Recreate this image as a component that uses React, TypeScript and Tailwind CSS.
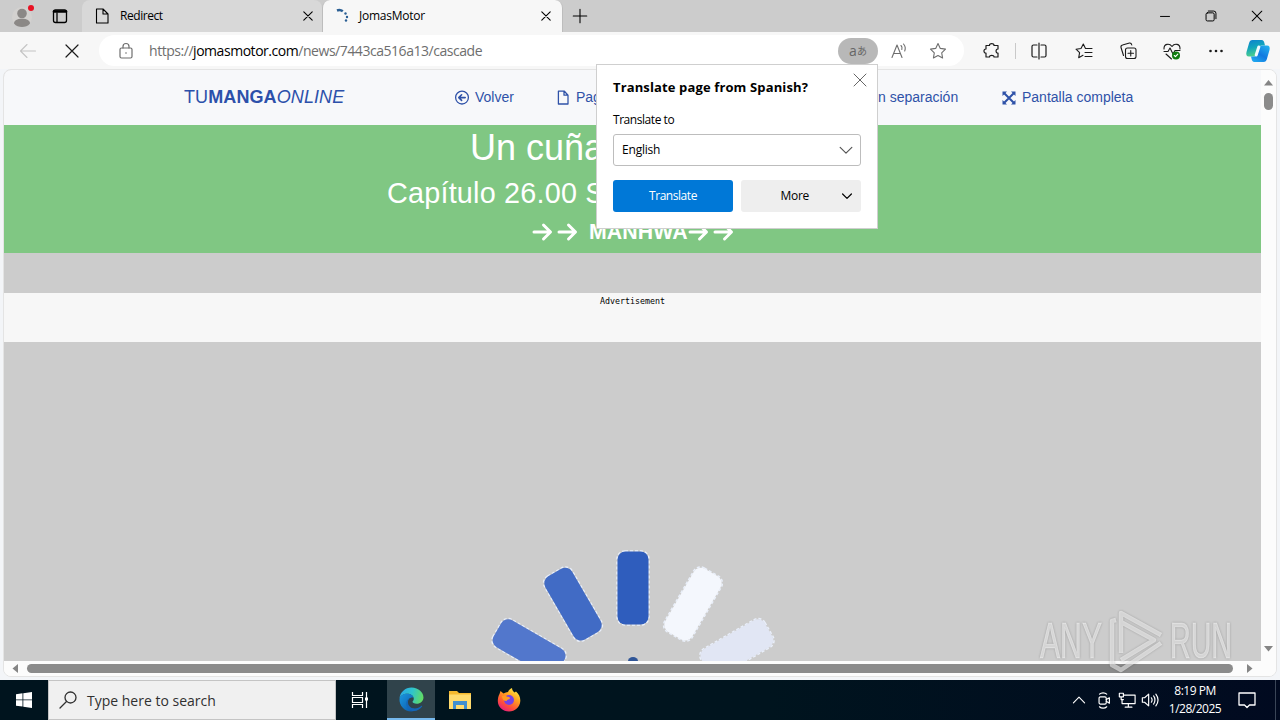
import type { ReactNode } from "react";

interface IconProps {
  children: ReactNode;
  size?: number;
  stroke?: number;
  className?: string;
}

// All line icons share a 20x20 grid
function Icon({ children, size = 20, stroke = 1.1, className = "" }: IconProps) {
  return (
    <svg
      width={size}
      height={size}
      viewBox="0 0 20 20"
      fill="none"
      stroke="currentColor"
      strokeWidth={stroke}
      strokeLinecap="round"
      strokeLinejoin="round"
      className={`shrink-0 ${className}`}
    >
      {children}
    </svg>
  );
}

function CloseIcon({ size = 20, stroke = 1.1 }: { size?: number; stroke?: number }) {
  return (
    <Icon size={size} stroke={stroke}>
      <path d="M4 4l12 12M16 4L4 16" />
    </Icon>
  );
}

const starPath =
  "M10 2.6l2.3 4.8 5.2.7-3.8 3.7.9 5.2-4.6-2.5L5.4 17l.9-5.2-3.8-3.7 5.2-.7z";

function TabBar() {
  return (
    <div className="flex h-8 bg-[#cccccc] text-black">
      <div className="flex w-[82px] shrink-0 items-center">
        <svg width="24" height="26" viewBox="0 0 24 26" className="ml-[11px]">
          <circle cx="11" cy="14" r="10" fill="#d3d1cf" />
          <circle cx="11" cy="10.5" r="4.8" fill="#8b8886" />
          <path d="M3 20.5c0-3 3-4.7 8-4.7s8 1.7 8 4.7c-2 2.7-5 3.5-8 3.5s-6-.8-8-3.5z" fill="#8b8886" />
          <circle cx="20" cy="5" r="3" fill="#e81123" />
        </svg>
        <Icon size={20} stroke={1.3} className="ml-[15px]">
          <rect x="3.5" y="4" width="13" height="12.5" rx="2" />
          <path d="M4 5.5h12" strokeWidth="2.6" />
          <path d="M7 7v9" />
        </Icon>
      </div>
      <div className="flex w-[240px] shrink-0 items-center rounded-t-lg bg-[#d8d8d8] pl-[10px]">
        <Icon size={20} stroke={1.1}>
          <path d="M4.500 3h6.500l5 5v9h-11.500zM11 3v5h5" />
        </Icon>
        <span className="ml-2 flex-1 text-[12px] tracking-[-0.45px]">Redirect</span>
        <span className="mr-[7px]">
          <CloseIcon size={14} stroke={1.6} />
        </span>
      </div>
      <div className="flex w-[241px] shrink-0 items-center rounded-t-lg border-x border-[#bdbdbd] bg-[#f7f7f7] pl-3">
        <svg width="16" height="16" viewBox="0 0 16 16" fill="none" className="shrink-0">
          <path d="M2 2.500c2-.8 4-.6 5.800.8" stroke="#2b5f94" strokeWidth="2.500" />
          <circle cx="10.500" cy="5.500" r="1.200" fill="#2b5f94" />
          <circle cx="12" cy="9" r="1.200" fill="#2b5f94" />
          <circle cx="11" cy="12.500" r="1.200" fill="#2b5f94" />
        </svg>
        <span className="ml-2 flex-1 text-[12px] tracking-[-0.25px]">JomasMotor</span>
        <span className="mr-[9px]">
          <CloseIcon size={14} stroke={1.6} />
        </span>
      </div>
      <div className="flex w-[33px] items-center justify-center">
        <Icon size={18} stroke={1.2}>
          <path d="M10 2.500v15M2.500 10h15" />
        </Icon>
      </div>
      <div className="flex-1" />
      <div className="flex w-[138px]">
        <div className="flex w-[46px] items-center justify-center">
          <Icon size={18}>
            <path d="M5 10.500h10" />
          </Icon>
        </div>
        <div className="flex w-[46px] items-center justify-center">
          <Icon size={18}>
            <rect x="4.500" y="6.500" width="9" height="9" rx="1.500" />
            <path d="M7 4.500h6a2.500 2.500 0 0 1 2.500 2.500v6" />
          </Icon>
        </div>
        <div className="flex w-[46px] items-center justify-center">
          <CloseIcon size={16} stroke={1.3} />
        </div>
      </div>
    </div>
  );
}

function Copilot() {
  return (
    <svg width="26" height="24" viewBox="0 0 26 24">
      <defs>
        <linearGradient id="cp1" x1="0" y1="0" x2="0.3" y2="1">
          <stop offset="0" stopColor="#0f7fd0" />
          <stop offset="0.5" stopColor="#12a5bc" />
          <stop offset="1" stopColor="#4fd08c" />
        </linearGradient>
        <linearGradient id="cp2" x1="1" y1="0" x2="0.3" y2="1">
          <stop offset="0" stopColor="#25b7f0" />
          <stop offset="0.6" stopColor="#1379e0" />
          <stop offset="1" stopColor="#1fa4ee" />
        </linearGradient>
      </defs>
      <path d="M7.500 1h9c2 0 2.500 1.500 3 3.500l.5 2h-3c-2 0-3 1-3.600 3l-1.500 5c-.6 2-1.500 3-3.400 3H4C1.500 17.500.8 15.500 1.500 13l2.600-9C4.700 2 5.500 1 7.500 1z" fill="url(#cp1)" />
      <path d="M18.500 23h-9c-2 0-2.500-1.500-3-3.500l-.5-2h3c2 0 3-1 3.600-3l1.500-5c.6-2 1.500-3 3.400-3H22c2.500 0 3.200 2 2.500 4.500l-2.600 9c-.6 2-1.400 3-3.400 3z" fill="url(#cp2)" />
      <path d="M13.800 8l-2.600 8" stroke="#f3fbff" strokeWidth="3" strokeLinecap="round" />
    </svg>
  );
}

function Toolbar() {
  return (
    <div className="flex h-[37px] items-center bg-[#f7f7f7] text-[#1b1b1b]">
      <div className="flex w-14 justify-center text-[#c4c4c4]">
        <Icon>
          <path d="M2.500 10h15M9 3.500L2.500 10l6.500 6.500" />
        </Icon>
      </div>
      <div className="flex w-[43px] justify-center pr-[11px]">
        <CloseIcon size={20} stroke={1.2} />
      </div>
      <div className="flex h-[31px] w-[865px] items-center rounded-full bg-white text-[#6e6e6e]">
        <Icon className="ml-[17px]" stroke={1.2}>
          <rect x="4" y="7" width="12" height="10" rx="1.500" />
          <path d="M7 7V5.500a3 3 0 0 1 6 0V7" />
          <circle cx="10" cy="12" r="0.800" fill="currentColor" stroke="none" />
        </Icon>
        <span className="ml-[13px] flex-1 text-[14px] tracking-[-0.46px]">
          https://<span className="text-black">jomasmotor.com</span>/news/7443ca516a13/cascade
        </span>
        <span className="flex h-[26px] w-10 items-center justify-center rounded-full bg-[#b8b8b8] text-[14px] leading-none text-[#666]">
          a<span className="font-['Noto_Sans_CJK_JP',sans-serif] text-[10px]">あ</span>
        </span>
        <span className="flex w-10 justify-center pl-px">
          <Icon>
            <path d="M3 16.500L8 4l5 12.500M4.800 12.500h6.400M12 4.500c1 1 1.300 2.500.8 4M14.500 3c1.800 2 2.200 4.500 1.200 7" />
          </Icon>
        </span>
        <span className="flex w-[46px] justify-start pl-[10px]">
          <Icon>
            <path d={starPath} />
          </Icon>
        </span>
      </div>
      <div className="flex w-[51px] justify-center pl-1">
        <Icon stroke={1.2}>
          <path d="M4 4.500h3.500c-.2-2.500 4.700-2.500 4.500 0H16V8c-2.600-.2-2.600 4.400 0 4.200V16h-4c.2-2.200-4.700-2.200-4.500 0H4v-3.800c-2.700.2-2.700-4.400 0-4.200z" />
        </Icon>
      </div>
      <div className="h-4 w-px bg-[#c9c9c9]" />
      <div className="flex w-[46px] justify-center">
        <Icon stroke={1.2}>
          <path d="M8 4H4.500A1.500 1.500 0 0 0 3 5.500v9A1.500 1.500 0 0 0 4.500 16H8M12 4h3.500A1.500 1.500 0 0 1 17 5.500v9a1.500 1.500 0 0 1-1.500 1.500H12M10 2v16" />
        </Icon>
      </div>
      <div className="flex w-11 justify-center">
        <Icon stroke={1.1}>
          <path d="M12 7.500h-.5L9.300 3 7 7.500l-5 .7 3.600 3.500-.9 5L9 14.300M12.500 7.500H18M11 11.500h7M11 15.500h7" />
        </Icon>
      </div>
      <div className="flex w-11 justify-center">
        <Icon stroke={1.1}>
          <rect x="7.500" y="7" width="10.500" height="10.500" rx="2" />
          <path d="M12.750 9.500v5.500M10 12.250h5.500M5.500 14.500L3 6.500c-.3-1.500.3-2.200 1.500-2.500l7-2c1.400-.2 2 .5 2.300 2" />
        </Icon>
      </div>
      <div className="flex w-11 justify-center">
        <Icon stroke={1.1}>
          <path d="M2 8c-.3-5.500 5.500-6 8-2.500 2.500-3.500 8.300-3 8 2.500M2 10.500h4l2-3.500 3 6 2-3.500h5M4 13l5.500 5" />
          <circle cx="14" cy="14.500" r="4" fill="#107c10" stroke="none" />
          <path d="M12.300 14.500l1.200 1.200 2.300-2.500" stroke="#fff" />
        </Icon>
      </div>
      <div className="flex w-11 justify-center">
        <Icon>
          <g fill="currentColor" stroke="none">
            <circle cx="4.500" cy="10" r="1.300" />
            <circle cx="10" cy="10" r="1.300" />
            <circle cx="15.500" cy="10" r="1.300" />
          </g>
        </Icon>
      </div>
      <div className="flex w-[39px] justify-center">
        <Copilot />
      </div>
    </div>
  );
}

function Arrow() {
  return (
    <svg width="25" height="20" viewBox="0 0 25 20" fill="none" stroke="#fff" strokeWidth="3" strokeLinecap="round" strokeLinejoin="round">
      <path d="M2 10h16M11.500 3l7 7-7 7" />
    </svg>
  );
}

// Only the bars above the fold are visible
const spinnerBars = [
  { angle: -60, fill: "#5277cc" },
  { angle: -30, fill: "#416bc5" },
  { angle: 0, fill: "#2f5dbd" },
  { angle: 30, fill: "#f4f7fd" },
  { angle: 60, fill: "#e1e6f4" },
];

function Spinner() {
  return (
    <svg width="320" height="121" viewBox="0 0 320 121">
      {spinnerBars.map((bar) => (
        <g key={bar.angle} transform={`rotate(${bar.angle} 160 168)`}>
          <rect
            x="144"
            y="11"
            width="32"
            height="74"
            rx="8"
            fill="none"
            stroke="#e9effa"
            strokeWidth="1.5"
            strokeDasharray="3 2"
          />
          <rect x="144.500" y="11.500" width="31" height="73" rx="8" fill={bar.fill} />
        </g>
      ))}
      <ellipse cx="160" cy="121" rx="5" ry="4" fill="#2f5597" />
    </svg>
  );
}

function Viewer() {
  return (
    <div className="flex h-[591px] w-[1257px] flex-col overflow-hidden bg-[#cccccc] font-['Liberation_Sans',Arial,sans-serif]">
      <div className="flex h-[55px] shrink-0 items-center bg-[#f7f8fa] pl-[180px] text-[14px] text-[#2f52a8]">
        <div className="w-[270px] text-[18px] tracking-[0.1px] text-[#2c50aa]">
          TU<b>MANGA</b>
          <i>ONLINE</i>
        </div>
        <div className="flex w-[102px] items-center">
          <Icon size={16} stroke={1.6}>
            <circle cx="10" cy="9.500" r="8" />
            <path d="M14 9.500H6.500M9.500 6L6 9.500l3.500 3.500" strokeWidth="2" />
          </Icon>
          <span className="ml-[5px]">Volver</span>
        </div>
        <div className="flex w-[200px] items-center">
          <Icon size={16} stroke={1.6}>
            <path d="M3 1.500h7.500l4.500 5v11h-12zM10 1.500v5h5" />
          </Icon>
          <span className="ml-1">Pag</span>
        </div>
        <div className="w-[246px] pl-[122px]">n separación</div>
        <div className="flex items-center">
          <svg width="14" height="14" viewBox="0 0 14 14" fill="#2f52a8" stroke="#2f52a8">
            <path d="M2 2l10 10M12 2L2 12" strokeWidth="2" />
            <path d="M.5.5H5L.5 5zM13.500.5V5L9 .5zM.5 13.500V9L5 13.500zM13.500 13.500H9L13.500 9z" stroke="none" />
          </svg>
          <span className="ml-[6px] whitespace-nowrap">Pantalla completa</span>
        </div>
      </div>

      <div className="h-32 shrink-0 bg-[#80c783] text-white">
        <h1 className="pl-[466px] pt-px text-[36px] leading-[43px]">Un cuña</h1>
        <h2 className="pl-[383px] pt-[7px] text-[28.8px] leading-[35px] tracking-[0.2px]">
          Capítulo 26.00 S
        </h2>
        <div className="flex items-center pl-[528px] pt-[6px] text-[21.3px] font-bold leading-[28px]">
          <Arrow />
          <Arrow />
          <span className="ml-[7px] pt-px tracking-[0.1px]">MANHWA</span>
          <Arrow />
          <Arrow />
        </div>
      </div>

      <div className="mt-10 h-[49px] shrink-0 bg-[#f7f7f7] pt-[3px] text-center font-['DejaVu_Sans_Mono',monospace] text-[8.3px] leading-[11px] text-black">
        Advertisement
      </div>
      <div className="mt-auto flex pl-[469px]">
        <Spinner />
      </div>
    </div>
  );
}

function VerticalScrollbar() {
  return (
    <div className="flex flex-1 flex-col items-center bg-[#fcfcfc] pt-[10px] pb-[9px]">
      <svg width="9" height="6">
        <path d="M4.500 0L9 5.500H0z" fill="#858585" />
      </svg>
      <div className="mt-[7px] h-[17px] w-[9px] rounded-full bg-[#8b8b8b]" />
      <svg width="9" height="6" className="mt-auto">
        <path d="M0 0h9L4.500 5.500z" fill="#858585" />
      </svg>
    </div>
  );
}

function HorizontalScrollbar() {
  return (
    <div className="flex h-[15px] items-center bg-[#fcfcfc] pl-2">
      <svg width="6" height="9">
        <path d="M6 0v9L.5 4.500z" fill="#858585" />
      </svg>
      <div className="ml-[9px] h-[9px] w-[1206px] rounded-full bg-[#8b8b8b]" />
      <svg width="6" height="9" className="ml-[14px]">
        <path d="M0 0v9l5.500-4.500z" fill="#858585" />
      </svg>
    </div>
  );
}

function TranslatePopup() {
  return (
    <div className="absolute left-[596px] top-[64px] h-[165px] w-[282px] border border-[#cfcfcf] bg-white px-4 text-[12px] text-black">
      <div className="flex h-[44px] items-center justify-between">
        <h3 className="whitespace-nowrap pt-[2px] text-[13px] font-bold tracking-[0.13px]">
          Translate page from Spanish?
        </h3>
        <span className="-mr-[9px] -mt-[14px] text-[#666]">
          <CloseIcon size={20} stroke={1} />
        </span>
      </div>
      <div className="h-[25px] pt-[2px] leading-[18px] tracking-[-0.45px]">Translate to</div>
      <div className="flex h-8 items-center justify-between rounded-[3px] border border-[#bdbdbd] pl-2 pr-[5px]">
        <span className="tracking-[-0.2px]">English</span>
        <Icon size={18} stroke={1.3} className="text-[#555]">
          <path d="M3.500 7l6.500 6.500L16.500 7" />
        </Icon>
      </div>
      <div className="mt-[14px] flex gap-2">
        <button className="h-8 w-[120px] rounded-[3px] bg-[#0078d7] tracking-[-0.45px] text-white">
          Translate
        </button>
        <button className="flex h-8 w-[120px] items-center justify-end rounded-[3px] bg-[#eeeeee] pr-[6px]">
          <span className="mr-[30px] tracking-[-0.3px]">More</span>
          <Icon size={16} stroke={1.5}>
            <path d="M4.500 7.500L10 13l5.500-5.500" />
          </Icon>
        </button>
      </div>
    </div>
  );
}

function Watermark() {
  return (
    <svg
      width="204"
      height="68"
      viewBox="0 0 204 68"
      className="pointer-events-none absolute left-[1036px] top-[607px] font-['Liberation_Sans_Narrow','Liberation_Sans',sans-serif] drop-shadow-[0_0_1px_rgba(0,0,0,0.4)]"
    >
      <g fill="#fff" fillOpacity="0.55" stroke="#fff" strokeOpacity="0.35" fontSize="50">
        <text x="4" y="51" textLength="62" lengthAdjust="spacingAndGlyphs">ANY</text>
        <text x="134" y="51" textLength="62" lengthAdjust="spacingAndGlyphs">RUN</text>
      </g>
      <g fill="none" stroke="#fff" strokeOpacity="0.55" strokeWidth="4.500" strokeLinejoin="round">
        <path d="M85 46V6l40 22M85 15l33 18-33 20" />
        <path d="M80 13l-4 1v44l9 5 40-27" />
      </g>
    </svg>
  );
}

function EdgeLogo() {
  return (
    <svg width="25" height="25" viewBox="0 0 24 24">
      <defs>
        <linearGradient id="edgeTop" x1="0" y1="0.3" x2="1" y2="0.5">
          <stop offset="0" stopColor="#2aa8e8" />
          <stop offset="0.5" stopColor="#2fc4cc" />
          <stop offset="1" stopColor="#62dc62" />
        </linearGradient>
        <linearGradient id="edgeLow" x1="0" y1="0" x2="1" y2="1">
          <stop offset="0" stopColor="#1b98e0" />
          <stop offset="1" stopColor="#0b56a8" />
        </linearGradient>
      </defs>
      <path d="M0.500 11C1 5 6 .5 12 .5c7 0 11.500 5 11.500 9.500 0 3.500-3 6-6.500 6-2.500 0-4-.8-4-1.800 0-.8 1.200-1.200 1.200-3C14.200 8.500 11 6.500 8 6.500c-3.500 0-6.500 2-7.500 4.500z" fill="url(#edgeTop)" />
      <path d="M.5 11.500C1 8.500 4 6.500 8 6.500c3 0 5.500 1.500 6 3.800-3-.8-6 1.500-6 5 0 4 3 7.500 7 7.500-1 .5-2 .7-3 .7-7 0-12-6-11.500-12z" fill="url(#edgeLow)" />
      <path d="M10 11c-3 3-1 9 4 9.500 3 .3 5.500-.8 7.300-2.300.7-.5 1.200 0 .7.800C20 21.500 17.500 23 14.500 23c-5 0-8-4-7.500-8 .3-2 1.500-3.500 3-4z" fill="#1466b8" />
    </svg>
  );
}

function FirefoxLogo() {
  return (
    <svg width="24" height="24" viewBox="0 0 24 24">
      <defs>
        <linearGradient id="fox" x1="0.8" y1="0" x2="0.2" y2="1">
          <stop offset="0" stopColor="#fff14a" />
          <stop offset="0.35" stopColor="#ffa51f" />
          <stop offset="0.7" stopColor="#ff5038" />
          <stop offset="1" stopColor="#e31587" />
        </linearGradient>
      </defs>
      <path d="M2.500 6l1-3 3 2.500c1.500-1 3-1.500 4.500-1.500.5-1.500 2-3.500 4-4 0 2 1 3 2.500 4.500L19 3.500c3 2.500 4.500 6 4.300 9.500C23 19 18 23.500 12 23.500S.8 19 .8 13c0-2.500.6-5 1.700-7z" fill="url(#fox)" />
      <circle cx="12" cy="12" r="5" fill="#7542e5" />
      <path d="M5 8c2-1 4-.5 5 .8 1.500 0 3 .4 3 1.400-.5 1.500-3 1-3.500 2.800C6.500 13 5 11 5 8z" fill="#ff9a22" />
    </svg>
  );
}

function Taskbar() {
  return (
    <div className="flex h-10 items-center bg-gradient-to-r from-[#00141e] from-60% to-[#010a20] text-white">
      <div className="flex w-12 justify-center">
        <svg width="16" height="16" viewBox="0 0 16 16" fill="#fff">
          <path d="M0 2.200l6.500-.9v6.200H0zM7.300 1.200L16 0v7.500H7.300zM0 8.300h6.500v6.300L0 13.700zM7.300 8.300H16V16l-8.700-1.300z" />
        </svg>
      </div>
      <div className="flex h-10 w-[288px] items-center border border-[#c4c4c4] bg-[#f0f0f0] text-[#303030]">
        <Icon size={20} stroke={1.3} className="ml-[9px]">
          <circle cx="12.500" cy="7.500" r="5.500" />
          <path d="M8.500 11.500L2 18" />
        </Icon>
        <span className="ml-[9px] text-[14px]">Type here to search</span>
      </div>
      <div className="flex w-[51px] justify-center pr-[3px]">
        <svg width="18" height="18" viewBox="0 0 18 18" fill="none" stroke="#fff" strokeWidth="1.2">
          <path d="M1.500 1v3.500h10V1M1.500 17v-3.500h10V17M1.500 6.500h10v5h-10zM15.500 1v16" />
          <path d="M14 6.500h3v3h-3z" fill="#fff" stroke="none" />
        </svg>
      </div>
      <div className="flex h-10 w-12 items-center justify-center border-b-2 border-[#76b9ed] bg-[#30434b]">
        <EdgeLogo />
      </div>
      <div className="flex w-[49px] justify-center">
        <svg width="22" height="20" viewBox="0 0 22 20">
          <path d="M0 1h8l2 2h12v16H0z" fill="#f5b92e" />
          <path d="M0 4.500h22V19H0z" fill="#ffdb6e" />
          <path d="M4 11h14v8h-3v-4H7v4H4z" fill="#3f8fd0" />
        </svg>
      </div>
      <div className="flex w-[49px] justify-center">
        <FirefoxLogo />
      </div>
      <div className="flex-1" />
      <Icon size={16} stroke={1.4} className="mr-2">
        <path d="M3 13.500L10 6.500l7 7" />
      </Icon>
      <Icon size={18} stroke={1.3} className="mr-[5px]">
        <rect x="4.500" y="6.500" width="8" height="8" rx="1.500" />
        <path d="M12.500 9.500l3.500-2v6l-3.500-2M5 3.500c2-2 6-2 8 0M5 17.500c2 2 6 2 8 0" />
      </Icon>
      <Icon size={18} stroke={1.3} className="mr-[5px]">
        <path d="M6.500 4.500H19V14H4.500V9.500M11.500 14v4M8 18h7.500M1.500 2.500H6v4H1.500zM3.500 6.500v3H6" />
      </Icon>
      <Icon size={18} stroke={1.3} className="mr-[9px]">
        <path d="M1.500 7.500H4L8.500 3.500v13L4 12.500H1.500zM11.500 7.500c1 1.500 1 3.500 0 5M14 5.500c2 2.500 2 6.500 0 9M16.500 3.500c3 4 3 9 0 13" />
      </Icon>
      <div className="w-[54px] text-center text-[12px] leading-[18px] tracking-[-0.5px]">
        <div className="whitespace-nowrap">8:19 PM</div>
        <div className="whitespace-nowrap">1/28/2025</div>
      </div>
      <Icon size={20} stroke={1.3} className="ml-[15px] mr-[18px]">
        <path d="M2 3h16v12h-5.500L10 17.500 7.500 15H2z" />
      </Icon>
      <div className="mr-1 h-10 w-px bg-[#3a4557]" />
    </div>
  );
}

export default function App() {
  return (
    <div className="relative h-[720px] w-[1280px] overflow-hidden bg-[#f3f5f8] font-['Open_Sans','Noto_Sans',sans-serif]">
      <TabBar />
      <Toolbar />
      <div className="mx-[3px] mb-[3px] h-[608px] overflow-hidden rounded-lg border border-[#e4e4e4] bg-[#fcfcfc]">
        <div className="flex h-[591px]">
          <Viewer />
          <VerticalScrollbar />
        </div>
        <HorizontalScrollbar />
      </div>
      <Taskbar />
      <TranslatePopup />
      <Watermark />
    </div>
  );
}
